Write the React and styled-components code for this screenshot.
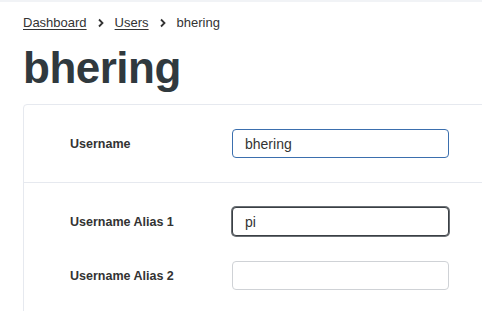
import React from "react";
import styled, { createGlobalStyle } from "styled-components";

const Global = createGlobalStyle`
  html, body { margin: 0; padding: 0; background: #fff; overflow: hidden; }
  body { font-family: "Liberation Sans", Arial, sans-serif; color: #333; }
`;

const Page = styled.div`
  border-top: 2px solid #f1f3f6;
  padding: 13px 0 0 23px;
  width: 482px;
  height: 311px;
  box-sizing: border-box;
  overflow: hidden;
`;

const Crumbs = styled.nav`
  display: flex;
  align-items: center;
  gap: 10px;
  font-size: 13px;
  line-height: 16px;
  color: #333;
`;

const Crumb = styled.a`
  color: #333;
  text-decoration: underline;
  text-underline-offset: 2px;
`;

const Title = styled.h1`
  margin: 11px 0 0;
  font-size: 44px;
  line-height: 52px;
  font-weight: 700;
  color: #30393e;
  letter-spacing: -0.5px;
`;

const Card = styled.div`
  margin-top: 10px;
  width: 520px;
  border: 1px solid #e6e9ef;
  border-radius: 4px;
`;

const Section = styled.div`
  padding: ${(p) => p.$pad};
  display: flex;
  flex-direction: column;
  gap: 25px;
  & + & { border-top: 1px solid #e6e9ef; }
`;

const Row = styled.div`
  display: grid;
  grid-template-columns: 162px 217px;
  align-items: center;
  padding-left: 46px;
`;

const Label = styled.label`
  font-size: 12.5px;
  font-weight: 700;
  color: #333;
`;

const Input = styled.input`
  box-sizing: border-box;
  width: 217px;
  height: 29px;
  padding: 0 12px;
  font-family: "Liberation Sans", Arial, sans-serif;
  font-size: 14px;
  color: #333;
  border-radius: 4px;
  outline: none;
  border: 1px solid ${(p) => (p.$state === "active" ? "#3b6fae" : p.$state === "focus" ? "#3a3f44" : "#cfd2d6")};
  box-shadow: ${(p) => (p.$state === "focus" ? "0 0 0 1px #6a6f74" : "none")};
  background: #fff;
`;

const Chevron = () => (
  <svg width="8" height="10" viewBox="0 0 8 10">
    <path d="M2 1.5 L5.5 5 L2 8.5" fill="none" stroke="#333" strokeWidth="1.8" />
  </svg>
);

export default function App() {
  return (
    <>
      <Global />
      <Page>
        <Crumbs>
          <Crumb href="#">Dashboard</Crumb>
          <Chevron />
          <Crumb href="#">Users</Crumb>
          <Chevron />
          <span>bhering</span>
        </Crumbs>
        <Title>bhering</Title>
        <Card>
          <Section $pad="24px 0 24px">
            <Row>
              <Label>Username</Label>
              <Input $state="active" defaultValue="bhering" />
            </Row>
          </Section>
          <Section $pad="24px 0 30px">
            <Row>
              <Label>Username Alias 1</Label>
              <Input $state="focus" defaultValue="pi" />
            </Row>
            <Row>
              <Label>Username Alias 2</Label>
              <Input defaultValue="" />
            </Row>
          </Section>
        </Card>
      </Page>
    </>
  );
}
